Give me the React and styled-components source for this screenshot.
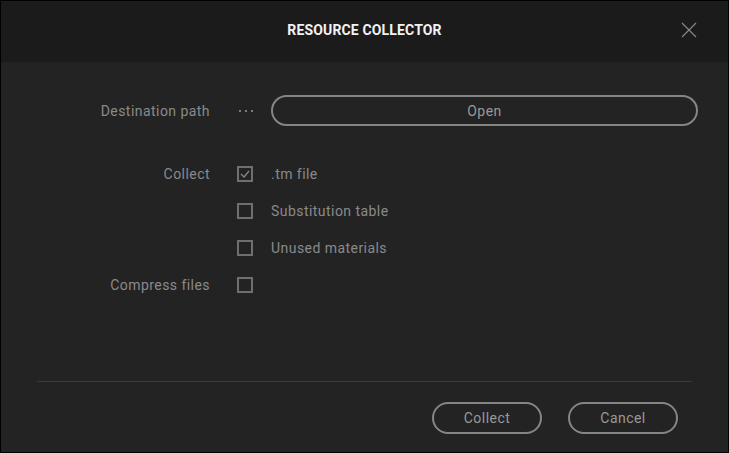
import React, { useState } from "react";
import styled, { createGlobalStyle } from "styled-components";

const Global = createGlobalStyle`
  html, body { margin: 0; padding: 0; background: #000; }
  body { font-family: Roboto, "Liberation Sans", sans-serif; }
  * { box-sizing: border-box; }
`;

const Window = styled.div`
  width: 729px;
  height: 453px;
  border: 1px solid #000;
  background: #232323;
  display: flex;
  flex-direction: column;
`;

const Header = styled.div`
  height: 61px;
  flex: none;
  background: #1b1b1b;
  position: relative;
  display: flex;
  align-items: center;
  justify-content: center;
`;

const Title = styled.h1`
  margin: 0;
  font-family: Roboto, "Liberation Sans", sans-serif;
  font-weight: 700;
  font-size: 14px;
  letter-spacing: 0.15px;
  color: #f2f2f2;
  transform: translate(0, -2px);
`;

const CloseButton = styled.button`
  position: absolute;
  right: 30px;
  top: 20px;
  width: 18px;
  height: 18px;
  padding: 0;
  border: 0;
  background: transparent;
  display: flex;
  align-items: center;
  justify-content: center;
  cursor: pointer;
`;

const Body = styled.div`
  flex: 1;
  display: flex;
  flex-direction: column;
  padding: 33px 0 18px;
`;

const Form = styled.div`
  display: grid;
  grid-template-columns: 173px 1fr;
  column-gap: 27px;
  padding-left: 36px;
  padding-right: 30px;
`;

const Label = styled.div`
  font-size: 14px;
  letter-spacing: 0.45px;
  color: #8a8a8a;
  text-align: right;
  display: flex;
  align-items: center;
  justify-content: flex-end;
  height: ${(p) => p.$h}px;
  margin-top: ${(p) => p.$mt || 0}px;
`;

const Control = styled.div`
  display: flex;
  align-items: center;
  height: ${(p) => p.$h}px;
  margin-top: ${(p) => p.$mt || 0}px;
`;

const Dots = styled.div`
  width: 34px;
  flex: none;
  display: flex;
  gap: 4px;
  padding-left: 2px;
  align-items: center;
  span {
    width: 2px;
    height: 2px;
    background: #9a9a9a;
    border-radius: 1px;
  }
`;

const PillButton = styled.button`
  height: ${(p) => p.$h || 32}px;
  width: ${(p) => (p.$w ? `${p.$w}px` : "auto")};
  flex: ${(p) => (p.$grow ? 1 : "none")};
  border: 2px solid #858585;
  border-radius: 999px;
  background: transparent;
  color: #999999;
  font-family: Roboto, "Liberation Sans", sans-serif;
  font-size: 14px;
  letter-spacing: 0.45px;
  padding: 0;
  cursor: pointer;
`;

const CheckRow = styled.label`
  display: flex;
  align-items: center;
  gap: 18px;
  font-size: 14px;
  letter-spacing: 0.45px;
  color: #8a8a8a;
  cursor: pointer;
`;

const Box = styled.span`
  width: 16px;
  height: 16px;
  flex: none;
  border: 2px solid #6f6f6f;
  display: flex;
  align-items: center;
  justify-content: center;
`;

const Spacer = styled.div`
  flex: 1;
`;

const Separator = styled.div`
  height: 1px;
  background: #3a3a3a;
  margin: 0 36px;
`;

const Footer = styled.div`
  display: flex;
  justify-content: flex-end;
  gap: 26px;
  padding-right: 50px;
  margin-top: 20px;
`;

function Checkbox({ checked, onToggle, children }) {
  return (
    <CheckRow onClick={onToggle}>
      <Box>
        {checked && (
          <svg width="10" height="8" viewBox="0 0 10 8">
            <path d="M1 4 L4 7 L9 1" fill="none" stroke="#8a8a8a" strokeWidth="1.2" />
          </svg>
        )}
      </Box>
      {children}
    </CheckRow>
  );
}

export default function App() {
  const [opts, setOpts] = useState({ tm: true, sub: false, unused: false, compress: false });
  const toggle = (k) => setOpts((o) => ({ ...o, [k]: !o[k] }));
  return (
    <>
      <Global />
      <Window>
        <Header>
          <Title>RESOURCE COLLECTOR</Title>
          <CloseButton aria-label="Close">
            <svg width="16" height="16" viewBox="0 0 16 16">
              <path d="M1 1 L15 15 M15 1 L1 15" stroke="#8a8a8a" strokeWidth="1.1" />
            </svg>
          </CloseButton>
        </Header>
        <Body>
          <Form>
            <Label $h={31}>Destination path</Label>
            <Control $h={31}>
              <Dots>
                <span />
                <span />
                <span />
              </Dots>
              <PillButton $h={31} $grow>Open</PillButton>
            </Control>

            <Label $h={37} $mt={29}>Collect</Label>
            <Control $h={37} $mt={29}>
              <Checkbox checked={opts.tm} onToggle={() => toggle("tm")}>.tm file</Checkbox>
            </Control>

            <Label $h={37} />
            <Control $h={37}>
              <Checkbox checked={opts.sub} onToggle={() => toggle("sub")}>Substitution table</Checkbox>
            </Control>

            <Label $h={37} />
            <Control $h={37}>
              <Checkbox checked={opts.unused} onToggle={() => toggle("unused")}>Unused materials</Checkbox>
            </Control>

            <Label $h={37}>Compress files</Label>
            <Control $h={37}>
              <Checkbox checked={opts.compress} onToggle={() => toggle("compress")} />
            </Control>
          </Form>
          <Spacer />
          <Separator />
          <Footer>
            <PillButton $w={110} $h={32}>Collect</PillButton>
            <PillButton $w={110} $h={32}>Cancel</PillButton>
          </Footer>
        </Body>
      </Window>
    </>
  );
}
